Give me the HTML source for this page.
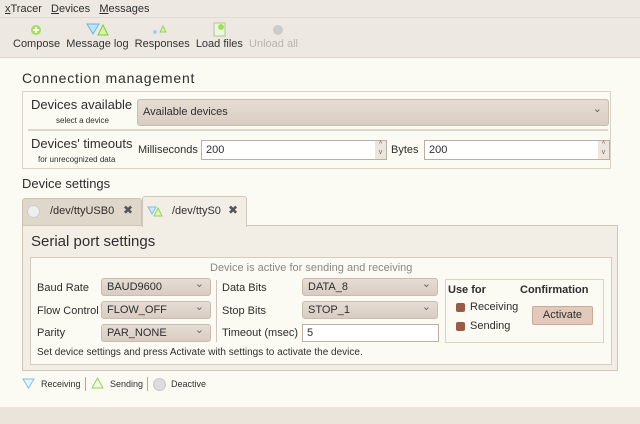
<!DOCTYPE html>
<html><head><style>
*{margin:0;padding:0;box-sizing:border-box}
body{width:640px;height:424px;overflow:hidden;background:#fbfaf3;font-family:"Liberation Sans","DejaVu Sans",sans-serif;font-size:11px;color:#2e2e2e;position:relative}
.a{position:absolute;white-space:nowrap}
.combo{position:absolute;background:linear-gradient(#e6ddd4,#d9cdc2);border:1px solid #c9bcb0;border-radius:3px;padding-left:5px;line-height:16px}
.combo:after{content:"⌄";position:absolute;right:6px;top:-3px;color:#666;font-size:11px}
.entry{position:absolute;background:#fff;border:1px solid #b9b0a5;padding-left:4px}
.cb{position:absolute;width:9px;height:9px;background:#9a5a48;border-radius:2px}
</style></head><body>
<div class="a" style="left:0;top:0;width:640px;height:57px;background:#ede9e2"></div>
<div class="a" style="left:0;top:17px;width:640px;height:1px;background:#e0dbd3"></div>
<div class="a" style="left:5px;top:3px;font-size:11px"><u>x</u>Tracer&nbsp;&nbsp; <u>D</u>evices&nbsp;&nbsp; <u>M</u>essages</div>
<svg class="a" style="left:0;top:20px" width="300" height="22">
<circle cx="36" cy="10" r="5" fill="#9ee05a"/><rect x="33" y="9" width="6" height="2" fill="#fff"/><rect x="35" y="7" width="2" height="6" fill="#fff"/>
<path d="M87 4 L99 4 L93 14Z" fill="#bde4f5" stroke="#6ab8e0"/><path d="M98 15 L103 5 L108 15Z" fill="#d6f5a0" stroke="#80c840"/>
<circle cx="155" cy="12" r="2" fill="#a0d0f0"/><path d="M160 12 L163 6 L166 12Z" fill="#d6f5a0" stroke="#9ad060"/>
<rect x="214" y="3" width="11" height="13" fill="#eef5e0" stroke="#b0c890"/><circle cx="221" cy="7" r="3" fill="#9ee05a"/>
<circle cx="278" cy="10" r="5" fill="#ccc"/>
</svg>
<div class="a" style="left:13px;top:38px;color:#333">Compose&nbsp; Message log&nbsp; Responses&nbsp; Load files&nbsp; <span style="color:#b8b4ae">Unload all</span></div>
<div class="a" style="left:0;top:57px;width:640px;height:1px;background:#ddd6cc"></div>

<div class="a" style="left:22px;top:70px;font-size:14px;letter-spacing:0.8px">Connection management</div>
<div class="a" style="left:22px;top:91px;width:589px;height:78px;border:1px solid #d9d2c6"></div>
<div class="a" style="left:31px;top:97px;font-size:13px">Devices available</div>
<div class="a" style="left:56px;top:116px;font-size:8px">select a device</div>
<div class="combo" style="left:137px;top:99px;width:472px;height:27px;line-height:25px">Available devices</div>
<div class="a" style="left:28px;top:129px;width:580px;height:2px;background:#ddd6cc"></div>
<div class="a" style="left:31px;top:136px;font-size:13px">Devices' timeouts</div>
<div class="a" style="left:38px;top:155px;font-size:8px">for unrecognized data</div>
<div class="a" style="left:138px;top:144px">Milliseconds</div>
<div class="entry" style="left:201px;top:140px;width:186px;height:20px;line-height:18px">200</div>
<div class="a" style="left:391px;top:144px">Bytes</div>
<div class="entry" style="left:424px;top:140px;width:186px;height:20px;line-height:18px">200</div>
<div class="a" style="left:375px;top:141px;width:11px;height:18px;background:#ece6de;font-size:7px;text-align:center;line-height:8px;color:#666">^<br>v</div>
<div class="a" style="left:598px;top:141px;width:11px;height:18px;background:#ece6de;font-size:7px;text-align:center;line-height:8px;color:#666">^<br>v</div>

<div class="a" style="left:22px;top:176px;font-size:13px">Device settings</div>
<div class="a" style="left:22px;top:198px;width:120px;height:28px;background:#e0d7cb;border:1px solid #cdc3b6;border-radius:3px 3px 0 0"></div>
<div class="a" style="left:27px;top:205px;width:13px;height:13px;border-radius:50%;background:#eee;border:1px solid #ccc"></div>
<div class="a" style="left:50px;top:205px">/dev/ttyUSB0</div>
<div class="a" style="left:123px;top:203px;font-size:12px;color:#555">✖</div>
<div class="a" style="left:22px;top:225px;width:596px;height:146px;background:#f3eee5;border:1px solid #cfc6b9"></div>
<div class="a" style="left:142px;top:196px;width:105px;height:31px;background:#f3eee5;border:1px solid #cfc6b9;border-bottom:none;border-radius:3px 3px 0 0"></div>
<svg class="a" style="left:147px;top:205px" width="18" height="12"><path d="M1 2L9 2L5 9Z" fill="#c8eaf8" stroke="#7fc0e0"/><path d="M7 11L11 3L15 11Z" fill="#e0f8b0" stroke="#9ad060"/></svg>
<div class="a" style="left:172px;top:205px">/dev/ttyS0</div>
<div class="a" style="left:228px;top:203px;font-size:12px;color:#555">✖</div>
<div class="a" style="left:31px;top:233px;font-size:15px">Serial port settings</div>
<div class="a" style="left:30px;top:257px;width:582px;height:108px;background:#fbfaf3;border:1px solid #d5ccbf"></div>
<div class="a" style="left:210px;top:262px;color:#888">Device is active for sending and receiving</div>
<div class="a" style="left:37px;top:282px">Baud Rate</div>
<div class="a" style="left:37px;top:305px">Flow Control</div>
<div class="a" style="left:37px;top:327px">Parity</div>
<div class="combo" style="left:101px;top:278px;width:110px;height:18px">BAUD9600</div>
<div class="combo" style="left:101px;top:301px;width:110px;height:18px">FLOW_OFF</div>
<div class="combo" style="left:101px;top:324px;width:110px;height:18px">PAR_NONE</div>
<div class="a" style="left:216px;top:280px;width:1px;height:62px;background:#cfc6b9"></div>
<div class="a" style="left:222px;top:282px">Data Bits</div>
<div class="a" style="left:222px;top:305px">Stop Bits</div>
<div class="a" style="left:222px;top:327px">Timeout (msec)</div>
<div class="combo" style="left:302px;top:278px;width:136px;height:18px">DATA_8</div>
<div class="combo" style="left:302px;top:301px;width:136px;height:18px">STOP_1</div>
<div class="entry" style="left:302px;top:324px;width:137px;height:18px;line-height:16px">5</div>
<div class="a" style="left:445px;top:279px;width:159px;height:64px;border:1px solid #d9d2c6"></div>
<div class="a" style="left:448px;top:284px;font-weight:bold">Use for</div>
<div class="a" style="left:520px;top:284px;font-weight:bold">Confirmation</div>
<div class="cb" style="left:456px;top:303px"></div>
<div class="a" style="left:470px;top:301px">Receiving</div>
<div class="cb" style="left:456px;top:322px"></div>
<div class="a" style="left:470px;top:320px">Sending</div>
<div class="a" style="left:532px;top:306px;width:61px;height:19px;background:#e3c9bb;border:1px solid #cbaa98;border-radius:2px;text-align:center;line-height:17px">Activate</div>
<div class="a" style="left:37px;top:347px;font-size:10px">Set device settings and press Activate with settings to activate the device.</div>

<svg class="a" style="left:22px;top:378px" width="14" height="12"><path d="M1 1L12 1L6.5 10Z" fill="#e6f5fc" stroke="#7fc0e0"/></svg>
<div class="a" style="left:41px;top:379px;font-size:9px">Receiving</div>
<div class="a" style="left:85px;top:377px;width:1px;height:14px;background:#aaa"></div>
<svg class="a" style="left:91px;top:377px" width="14" height="13"><path d="M1 11L6.5 1L12 11Z" fill="#eefad8" stroke="#9ad060"/></svg>
<div class="a" style="left:110px;top:379px;font-size:9px">Sending</div>
<div class="a" style="left:147px;top:377px;width:1px;height:14px;background:#aaa"></div>
<div class="a" style="left:153px;top:378px;width:13px;height:13px;border-radius:50%;background:#ddd;border:1px solid #c8c8c8"></div>
<div class="a" style="left:171px;top:379px;font-size:9px">Deactive</div>
<div class="a" style="left:0;top:407px;width:640px;height:17px;background:#ebe4da"></div>
</body></html>
